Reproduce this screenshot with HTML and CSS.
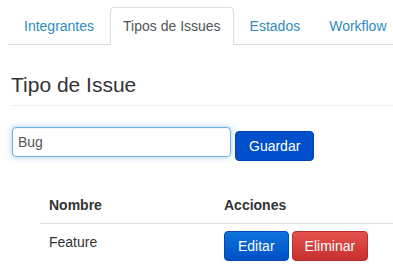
FILE: index.html
```html
<!DOCTYPE html>
<html lang="es">
<head>
    <meta charset="UTF-8">
    <meta name="viewport" content="width=device-width, initial-scale=1.0">
    <title>Tipos de Issues</title>
    <link rel="stylesheet" href="styles.css">
</head>
<body>
    <div class="page">
        <ul class="nav_tabs">
            <li><a href="#">Integrantes</a></li>
            <li class="active"><a href="#">Tipos de Issues</a></li>
            <li><a href="#">Estados</a></li>
            <li><a href="#">Workflow</a></li>
        </ul>

        <h3 class="section_title">Tipo de Issue</h3>

        <form class="issue_form">
            <input type="text" class="issue_input" value="Bug">
            <button type="button" class="btn btn_save">Guardar</button>
        </form>

        <table class="issue_table">
            <thead>
                <tr>
                    <th class="col_name">Nombre</th>
                    <th>Acciones</th>
                </tr>
            </thead>
            <tbody>
                <tr>
                    <td>Feature</td>
                    <td>
                        <div class="actions">
                            <button type="button" class="btn btn_primary">Editar</button>
                            <button type="button" class="btn btn_danger">Eliminar</button>
                        </div>
                    </td>
                </tr>
            </tbody>
        </table>
    </div>
</body>
</html>
```

FILE: styles.css
```css
*{
    margin: 0;
    padding: 0;
    box-sizing: border-box;
}

body{
    font-family: "Liberation Sans", Arial, sans-serif;
    font-size: 14px;
    color: #333;
    background: #fff;
    overflow: hidden;
}

.page{
    padding-top: 7px;
}

/* tabs */

.nav_tabs{
    display: flex;
    list-style: none;
    margin-left: 8px;
    padding-left: 3px;
    border-bottom: 1px solid #ddd;
}

.nav_tabs li{
    margin-right: 3px;
    margin-bottom: -1px;
}

.nav_tabs li a{
    display: block;
    padding: 9px 12px;
    line-height: 18px;
    color: #2f8bc0;
    text-decoration: none;
    border: 1px solid transparent;
    border-radius: 4px 4px 0 0;
    white-space: nowrap;
}

.nav_tabs li.active a{
    color: #555;
    background: #fff;
    border-color: #ddd;
    border-bottom-color: #fff;
}

/* heading */

.section_title{
    margin: 28px 0 0 11px;
    padding-bottom: 9px;
    font-size: 21px;
    font-weight: normal;
    line-height: 23px;
    color: #333;
    border-bottom: 1px solid #eee;
}

/* form */

.issue_form{
    display: flex;
    align-items: flex-start;
    gap: 4px;
    margin: 21px 0 0 12px;
}

.issue_input{
    width: 219px;
    height: 30px;
    padding: 0 5px;
    font-family: inherit;
    font-size: 14px;
    color: #555;
    border: 1px solid #74b0e4;
    border-radius: 4px;
    box-shadow: inset 0 1px 1px rgba(0,0,0,.05), 0 0 6px rgba(102,175,233,.6);
    outline: none;
}

.btn{
    height: 30px;
    padding: 0 13px;
    font-family: inherit;
    font-size: 14px;
    color: #fff;
    border: 1px solid transparent;
    border-radius: 4px;
    cursor: pointer;
}

.btn_save{
    margin-top: 4px;
    background: #004fcb;
    border-color: #0043b4;
}

.btn_primary{
    background: linear-gradient(#0d75db, #0050c6);
    border-color: #0049b6;
}

.btn_danger{
    background: linear-gradient(#e4524e, #c7302c);
    border-color: #b8302c;
}

/* table */

.issue_table{
    margin: 26px 0 0 40px;
    width: calc(100% - 40px);
    border-collapse: collapse;
}

.issue_table th{
    text-align: left;
    font-weight: bold;
    padding: 8px 9px;
    line-height: 20px;
    border-bottom: 1px solid #ddd;
}

.issue_table .col_name{
    width: 175px;
}

.issue_table td{
    padding: 7px 9px;
    line-height: 22px;
    vertical-align: top;
}

.actions{
    display: flex;
    gap: 3px;
}

.btn_danger{
    padding: 0 12px;
}
```
